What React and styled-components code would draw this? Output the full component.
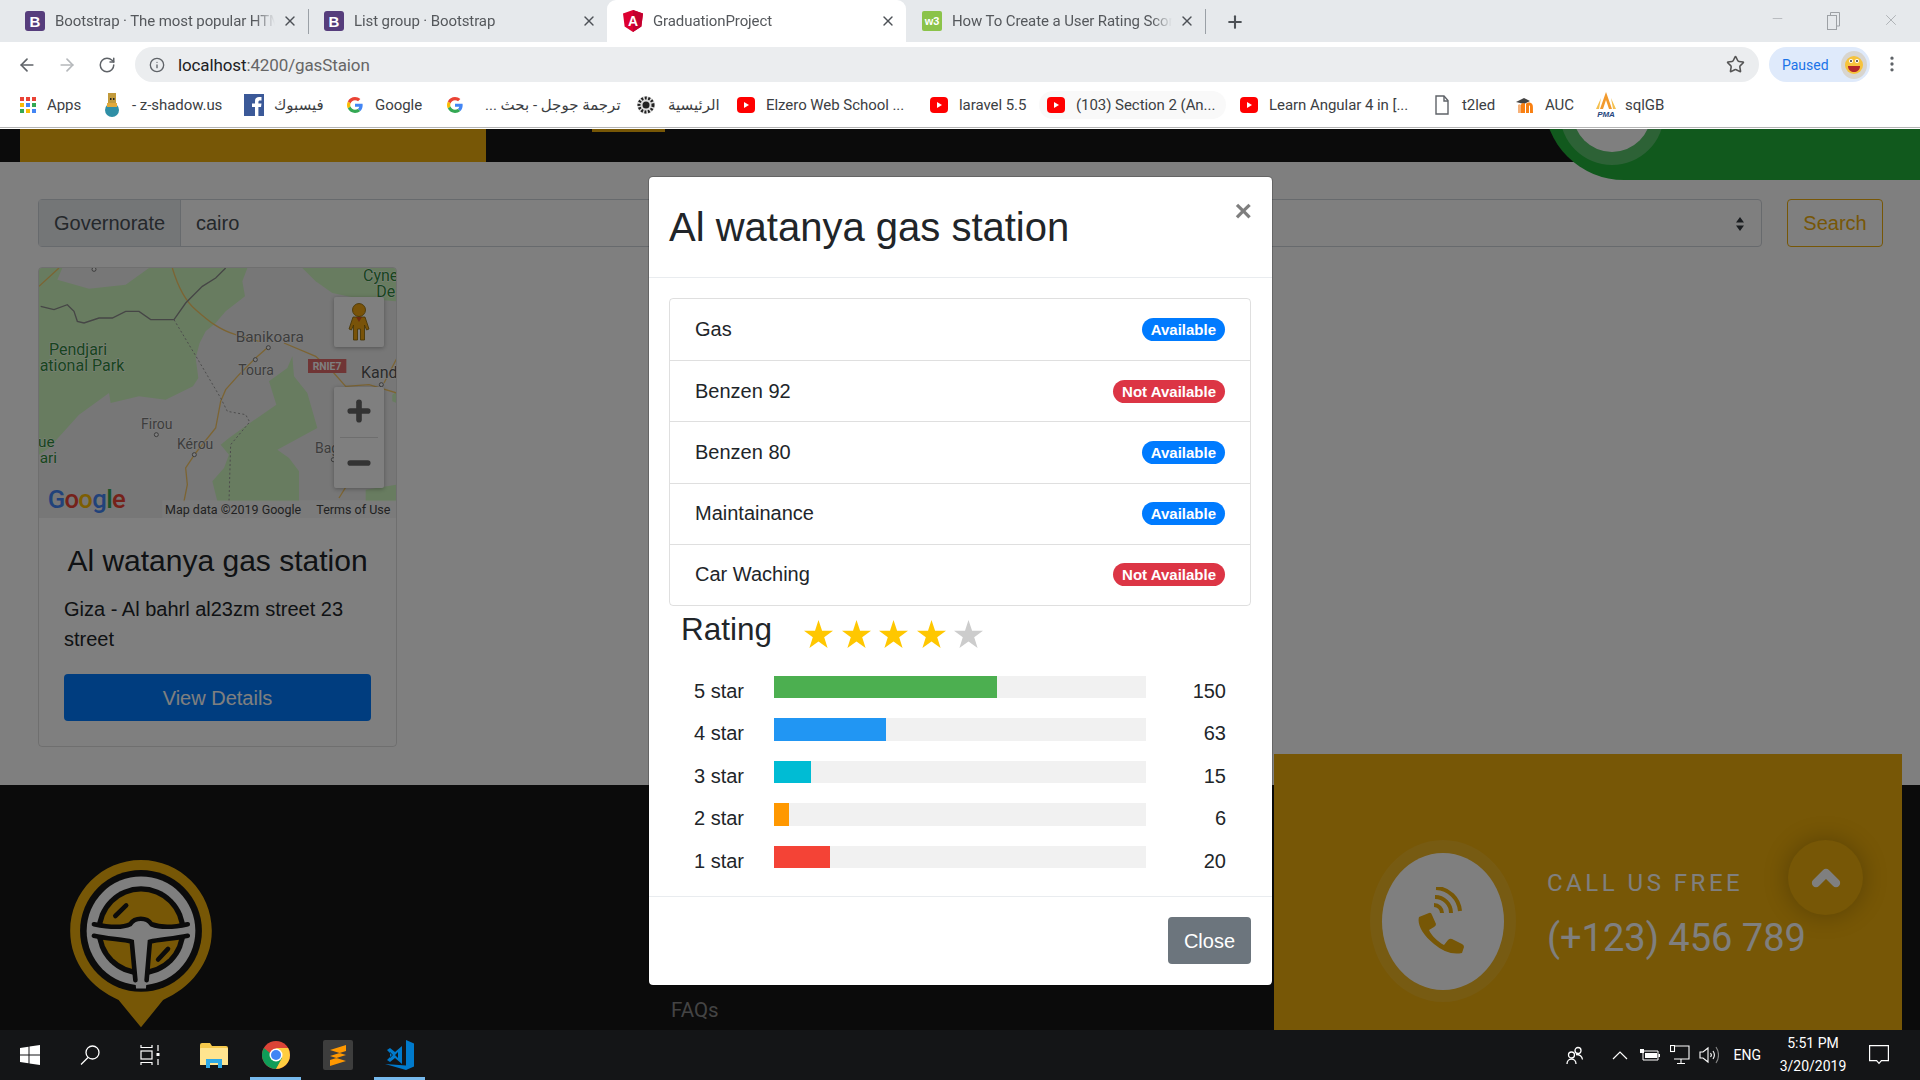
import React from 'react'
import styled, { createGlobalStyle } from 'styled-components'
import { ArrowLeft, ArrowRight, RotateCw, Info, Star, MoreVertical, Plus, X, Minus, ChevronUp } from 'lucide-react'

const GlobalStyle = createGlobalStyle`
  html, body { margin: 0; padding: 0; overflow: hidden; background: #fff; }
  * { box-sizing: border-box; }
  body { font-family: "Liberation Sans", Arial, sans-serif; }
`

const UI_FONT = `Roboto, "DejaVu Sans", sans-serif`

/* ---------- browser chrome ---------- */
const Screen = styled.div`
  width: 1920px;
  height: 1080px;
  display: flex;
  flex-direction: column;
  overflow: hidden;
`
const TabStrip = styled.div`
  height: 42px;
  flex: none;
  background: #e6e9ec;
  display: flex;
  align-items: stretch;
  padding-left: 9px;
  font-family: ${UI_FONT};
`
const Tab = styled.div`
  width: 299px;
  display: flex;
  align-items: center;
  padding-left: 16px;
  position: relative;
  background: ${p => (p.$active ? '#fff' : 'transparent')};
  border-radius: 9px 9px 0 0;
  &::after {
    content: '';
    display: ${p => (p.$sep ? 'block' : 'none')};
    position: absolute;
    right: -1px;
    top: 9px;
    bottom: 8px;
    width: 1px;
    background: #9aa0a6;
  }
`
const TabTitle = styled.span`
  margin-left: 10px;
  width: 220px;
  font-size: 15px;
  letter-spacing: -0.1px;
  color: #55585c;
  white-space: nowrap;
  overflow: hidden;
  flex: none;
  mask-image: linear-gradient(to right, #000 200px, transparent 220px);
`
const TabClose = styled(X)`
  margin-left: 7px;
  flex: none;
  color: #4d5156;
`
const NewTab = styled(Plus)`
  margin: 12px 0 0 20px;
  color: #4d5156;
`
const WindowButtons = styled.div`
  margin-left: auto;
  display: flex;
  align-items: flex-start;
  padding: 11px 20px 0 0;
  gap: 41px;
  color: #9da1a5;
`
const Toolbar = styled.div`
  height: 42px;
  flex: none;
  background: #fff;
  display: flex;
  align-items: flex-start;
  padding-top: 5px;
  position: relative;
  font-family: ${UI_FONT};
`
const NavButton = styled.div`
  width: 40px;
  height: 35px;
  display: flex;
  align-items: center;
  justify-content: center;
  color: ${p => (p.$muted ? '#b5b8bb' : '#5f6368')};
`
const NavRow = styled.div`
  display: flex;
  width: 135px;
  padding-left: 7px;
`
const Omnibox = styled.div`
  width: 1624px;
  height: 35px;
  border-radius: 18px;
  background: #ebedef;
  display: flex;
  align-items: center;
  padding: 0 14px 0 14px;
  color: #5f6368;
`
const Url = styled.span`
  margin-left: 13px;
  font-size: 17px;
  letter-spacing: -0.12px;
  color: #666;
  b { font-weight: 400; color: #202124; }
`
const StarWrap = styled.span`
  margin-left: auto;
  display: flex;
  color: #555;
`
const Paused = styled.div`
  margin-left: 10px;
  width: 101px;
  height: 35px;
  border-radius: 18px;
  background: #dfeafb;
  color: #1a73e8;
  font-size: 14px;
  display: flex;
  align-items: center;
  padding-left: 13px;
  gap: 12px;
`
const Kebab = styled(MoreVertical)`
  margin: 7px 0 0 12px;
  color: #5f6368;
`
const BookmarksBar = styled.div`
  height: 45px;
  flex: none;
  background: #fff;
  display: flex;
  align-items: center;
  padding: 0 0 4px 20px;
  position: relative;
  font-family: ${UI_FONT};
  &::after {
    content: '';
    position: absolute;
    left: 0;
    right: 0;
    bottom: 1px;
    height: 1px;
    background: #b4b4b4;
  }
`
const Bookmark = styled.div`
  width: ${p => p.$w}px;
  flex: none;
  display: flex;
  align-items: center;
  gap: ${p => p.$gap || 11}px;
  font-size: 15px;
  letter-spacing: -0.05px;
  color: #3c4043;
  white-space: nowrap;
  position: relative;
  &::before {
    content: '';
    display: ${p => (p.$hover ? 'block' : 'none')};
    position: absolute;
    left: -8px;
    right: 14px;
    top: -5px;
    bottom: -5px;
    border-radius: 16px;
    background: #f9f9f9;
    z-index: 0;
  }
  > * { position: relative; z-index: 1; flex: none; }
`

const BootstrapIcon = () => (
  <svg width="20" height="20" viewBox="0 0 20 20">
    <rect width="20" height="20" rx="3" fill="#563d7c" />
    <text x="10" y="15.5" textAnchor="middle" fontSize="15" fontWeight="700" fill="#fff" fontFamily="Liberation Sans">B</text>
  </svg>
)
const AngularIcon = () => (
  <svg width="20" height="22" viewBox="0 0 20 22">
    <path d="M10 0L0 3.6l1.6 13L10 22l8.4-5.4 1.6-13z" fill="#dd0031" />
    <path d="M10 0L20 3.6l-1.6 13L10 22z" fill="#c3002f" />
    <text x="10" y="16" textAnchor="middle" fontSize="14" fontWeight="700" fill="#fff" fontFamily="Liberation Sans">A</text>
  </svg>
)
const W3Icon = () => (
  <svg width="20" height="20" viewBox="0 0 20 20">
    <rect width="20" height="20" rx="2" fill="#8bc34a" />
    <text x="10" y="14" textAnchor="middle" fontSize="11" fontWeight="700" fill="#fff" fontFamily="Liberation Sans">w3</text>
  </svg>
)
const GoogleG = ({ size = 16 }) => (
  <svg width={size} height={size} viewBox="0 0 48 48">
    <path fill="#EA4335" d="M24 9.5c3.54 0 6.71 1.22 9.21 3.6l6.85-6.85C35.9 2.38 30.47 0 24 0 14.62 0 6.51 5.38 2.56 13.22l7.98 6.19C12.43 13.72 17.74 9.5 24 9.5z" />
    <path fill="#4285F4" d="M46.98 24.55c0-1.57-.15-3.09-.38-4.55H24v9.02h12.94c-.58 2.96-2.26 5.48-4.78 7.18l7.73 6c4.51-4.18 7.09-10.36 7.09-17.65z" />
    <path fill="#FBBC05" d="M10.53 28.59c-.48-1.45-.76-2.99-.76-4.59s.27-3.14.76-4.59l-7.98-6.19C.92 16.46 0 20.12 0 24c0 3.88.92 7.54 2.56 10.78l7.97-6.19z" />
    <path fill="#34A853" d="M24 48c6.48 0 11.93-2.13 15.89-5.81l-7.73-6c-2.15 1.45-4.92 2.3-8.16 2.3-6.26 0-11.57-4.22-13.47-9.91l-7.98 6.19C6.51 42.62 14.62 48 24 48z" />
  </svg>
)
const AppsIcon = () => {
  const cols = ['#ea4335', '#ea4335', '#ea4335', '#fbbc05', '#4285f4', '#34a853', '#34a853', '#fbbc05', '#4285f4']
  return (
    <svg width="16" height="16" viewBox="0 0 16 16">
      {cols.map((c, i) => <rect key={i} x={(i % 3) * 6} y={Math.floor(i / 3) * 6} width="4" height="4" fill={c} />)}
    </svg>
  )
}
const YoutubeIcon = () => (
  <svg width="18" height="18" viewBox="0 0 18 18">
    <rect y="1" width="18" height="16" rx="4" fill="#f00" />
    <path d="M7 6l5 3-5 3z" fill="#fff" />
  </svg>
)
const FacebookIcon = () => (
  <svg width="20" height="22" viewBox="0 0 20 22">
    <rect width="20" height="22" fill="#3b5998" />
    <path d="M11 22v-9H8V9.500h3V7c0-3 1.800-4 4-4h2.500v3.400H16c-1.200 0-1.600.6-1.600 1.500v1.600h3.100l-.5 3.500h-2.600v9z" fill="#fff" />
  </svg>
)
const GearIcon = () => (
  <svg width="20" height="20" viewBox="0 0 20 20">
    <circle cx="10" cy="10" r="9" fill="#ddd" />
    <circle cx="10" cy="10" r="7" fill="none" stroke="#222" strokeWidth="3" strokeDasharray="2 1.500" />
    <circle cx="10" cy="10" r="3.500" fill="#222" />
  </svg>
)
const BottleIcon = () => (
  <svg width="16" height="24" viewBox="0 0 16 24">
    <rect x="4" y="0" width="8" height="11" fill="#c29a3b" />
    <rect x="6" y="5" width="1.500" height="2" fill="#222" />
    <rect x="9" y="5" width="1.500" height="2" fill="#222" />
    <ellipse cx="8" cy="17" rx="7" ry="7" fill="#2f8fa6" />
    <rect x="3" y="10" width="10" height="4" fill="#e2a93a" />
  </svg>
)
const FileIcon = () => (
  <svg width="16" height="20" viewBox="0 0 16 20" fill="#fff" stroke="#5f6368" strokeWidth="1.400">
    <path d="M2 1h8l4 4.500V19H2z" />
    <path d="M10 1v5h4" fill="none" />
  </svg>
)
const MoodleIcon = () => (
  <svg width="21" height="18" viewBox="0 0 21 18">
    <path d="M1 6l8-4 6 3-6 3z" fill="#444" />
    <path d="M6 17V9c0-2 3-3 4-1v9zM11 17V8c1-2 5-2 6 0 1 1 1 2 1 9h-3V10c-1-1-1-1-1 0v7z" fill="#f98012" />
    <path d="M3 17V9c1-1 2-1 3 0v8z" fill="#f7b27a" />
  </svg>
)
const PmaIcon = () => (
  <svg width="22" height="26" viewBox="0 0 22 26">
    <path d="M11 0L5 17h3l3-9 3 9h3z" fill="#f29a2e" />
    <path d="M6 6L1 17h3zM16 6l5 11h-3z" fill="#f5c04e" />
    <text x="11" y="25" textAnchor="middle" fontSize="8" fontStyle="italic" fontWeight="700" fill="#26477e" fontFamily="Liberation Sans">PMA</text>
  </svg>
)
const Avatar = () => (
  <svg width="26" height="28" viewBox="0 0 26 28">
    <ellipse cx="13" cy="14" rx="13" ry="14" fill="#d8d5cf" />
    <circle cx="13" cy="14" r="9" fill="#f6c33c" />
    <circle cx="10" cy="10" r="2" fill="#fff" /><circle cx="16" cy="10" r="2" fill="#fff" />
    <circle cx="10" cy="10" r="1" fill="#333" /><circle cx="16" cy="10" r="1" fill="#333" />
    <path d="M7 15h12c0 4-3 6-6 6s-6-2-6-6z" fill="#b3262a" />
  </svg>
)

const bookmarks = [
  { w: 84, icon: <AppsIcon />, label: 'Apps' },
  { w: 140, icon: <BottleIcon />, label: '- z-shadow.us', gap: 12 },
  { w: 103, icon: <FacebookIcon />, label: 'فيسبوك', gap: 10 },
  { w: 100, icon: <GoogleG />, label: 'Google', gap: 12 },
  { w: 189, icon: <GoogleG />, label: 'ترجمة جوجل - بحث ...', gap: 22, rtl: true },
  { w: 101, icon: <GearIcon />, label: 'الرئيسية', gap: 12 },
  { w: 193, icon: <YoutubeIcon />, label: 'Elzero Web School ...', gap: 11 },
  { w: 117, icon: <YoutubeIcon />, label: 'laravel 5.5', gap: 11 },
  { w: 193, icon: <YoutubeIcon />, label: '(103) Section 2 (An...', gap: 11, hover: true },
  { w: 194, icon: <YoutubeIcon />, label: 'Learn Angular 4 in [...', gap: 11 },
  { w: 81, icon: <FileIcon />, label: 't2led', gap: 12 },
  { w: 80, icon: <MoodleIcon />, label: 'AUC', gap: 9 },
  { w: 80, icon: <PmaIcon />, label: 'sqlGB', gap: 8 },
]

/* ---------- the page behind the modal ---------- */
const Viewport = styled.div`
  flex: 1;
  position: relative;
  overflow: hidden;
  display: flex;
  flex-direction: column;
  background: #fff;
`
const TopBar = styled.div`
  height: 33px;
  flex: none;
  background: #161616;
  display: flex;
  align-items: flex-start;
  padding-left: 20px;
`
const TopBarBrand = styled.div`
  width: 466px;
  height: 33px;
  background: #eeae0c;
`
const TopBarMark = styled.div`
  width: 73px;
  height: 3px;
  margin-left: 106px;
  background: #eeae0c;
`
const GreenCorner = styled.div`
  position: absolute;
  top: -50px;
  right: 0;
  width: 376px;
  height: 101px;
  background: #22b23a;
  border-bottom-left-radius: 80px;
`
const RingOuter = styled.div`
  position: absolute;
  left: 1560px;
  top: -68px;
  width: 104px;
  height: 104px;
  border-radius: 50%;
  background: #5ac46d;
  display: flex;
  align-items: center;
  justify-content: center;
`
const RingInner = styled.div`
  width: 78px;
  height: 78px;
  border-radius: 50%;
  background: #fff;
`
const Main = styled.main`
  flex: 1;
  padding: 37px 37px 0 38px;
`
const SearchRow = styled.div`
  display: flex;
  gap: 25px;
`
const InputGroup = styled.div`
  width: 1724px;
  height: 48px;
  display: flex;
  border: 1px solid #ced4da;
  border-radius: 4px;
  font-size: 20px;
  color: #495057;
`
const Addon = styled.div`
  width: 142px;
  background: #e9ecef;
  border-right: 1px solid #ced4da;
  display: flex;
  align-items: center;
  padding-left: 15px;
`
const SelectValue = styled.div`
  flex: 1;
  display: flex;
  align-items: center;
  padding-left: 15px;
  position: relative;
`
const SelectCaret = styled.svg`
  position: absolute;
  right: 16px;
  top: 16px;
`
const SearchButton = styled.button`
  width: 96px;
  height: 48px;
  background: transparent;
  border: 1px solid #eeae0c;
  border-radius: 4px;
  color: #eeae0c;
  font: inherit;
  font-size: 20px;
  padding: 0;
`
const Card = styled.article`
  width: 359px;
  height: 480px;
  margin-top: 20px;
  border: 1px solid rgba(0, 0, 0, 0.125);
  border-radius: 4px;
  display: flex;
  flex-direction: column;
`
const MapBox = styled.div`
  height: 250px;
  flex: none;
  position: relative;
  overflow: hidden;
  border-radius: 3px 3px 0 0;
  background: #eee;
  svg { display: block; }
`
const MapButton = styled.div`
  position: absolute;
  left: 295px;
  width: 50px;
  background: #fff;
  border-radius: 2px;
  box-shadow: 0 1px 4px rgba(0, 0, 0, 0.3);
  display: flex;
  flex-direction: column;
  align-items: center;
`
const PegmanButton = styled(MapButton)`
  top: 29px;
  height: 50px;
  justify-content: center;
`
const ZoomButton = styled(MapButton)`
  top: 119px;
  height: 101px;
  padding-top: 9px;
  color: #666;
`
const ZoomSplit = styled.span`
  width: 38px;
  height: 1px;
  flex: none;
  margin: 11px 0 10px;
  background: #ddd;
`
const CardBody = styled.div`
  padding: 25px;
`
const CardTitle = styled.h5`
  margin: 0 0 15px;
  font-size: 30px;
  font-weight: 400;
  line-height: 36px;
  text-align: center;
  color: #212529;
  white-space: nowrap;
`
const CardText = styled.p`
  margin: 0 0 20px;
  font-size: 20px;
  line-height: 30px;
  color: #212529;
`
const DetailsButton = styled.button`
  display: block;
  width: 100%;
  height: 47px;
  border: 0;
  border-radius: 4px;
  background: #007bff;
  color: #fff;
  font: inherit;
  font-size: 20px;
  padding: 2px 0 0;
`
const Footer = styled.footer`
  height: 245px;
  flex: none;
  background: #161616;
  display: flex;
  align-items: flex-start;
  padding-left: 68px;
`
const FooterLogo = styled.svg`
  margin-top: 75px;
  flex: none;
`
const FooterLink = styled.a`
  margin: 213px 0 0 457px;
  font-family: Roboto, sans-serif;
  font-size: 20.500px;
  line-height: 24px;
  color: #888;
`
const CallPanel = styled.div`
  width: 628px;
  height: 276px;
  margin: -31px 18px 0 auto;
  background: #eeae0c;
  display: flex;
  align-items: flex-start;
  padding: 86px 0 0 96px;
`
const PhoneRing = styled.div`
  width: 146px;
  height: 162px;
  flex: none;
  border-radius: 50%;
  background: rgba(255, 255, 255, 0.1);
  display: flex;
  align-items: center;
  justify-content: center;
`
const PhoneDisc = styled.div`
  width: 122px;
  height: 137px;
  border-radius: 50%;
  background: #fff;
  display: flex;
  align-items: center;
  justify-content: center;
`
const CallText = styled.div`
  margin: 29px 0 0 31px;
  font-family: Roboto, sans-serif;
  color: #fff;
  white-space: nowrap;
`
const CallLabel = styled.div`
  font-size: 24px;
  line-height: 28px;
  letter-spacing: 3.500px;
`
const CallNumber = styled.div`
  margin-top: 18px;
  font-size: 38px;
  line-height: 46px;
`
const ScrollTop = styled.div`
  position: absolute;
  right: 57px;
  bottom: 115px;
  width: 75px;
  height: 75px;
  border-radius: 50%;
  background: #eeae0c;
  box-shadow: 0 0 24px rgba(0, 0, 0, 0.25);
  color: #fff;
  display: flex;
  align-items: center;
  justify-content: center;
`

/* ---------- modal ---------- */
const Backdrop = styled.div`
  position: absolute;
  inset: 0;
  background: rgba(0, 0, 0, 0.5);
`
const Modal = styled.section`
  position: absolute;
  left: 648px;
  top: 47px;
  width: 625px;
  height: 810px;
  background: #fff;
  border: 1px solid rgba(0, 0, 0, 0.2);
  border-radius: 5px;
  color: #212529;
  background-clip: padding-box;
`
const ModalHeader = styled.header`
  height: 101px;
  border-bottom: 1px solid #e9ecef;
  display: flex;
  align-items: center;
  justify-content: space-between;
  padding: 0 20px;
`
const ModalTitle = styled.h1`
  margin: 0;
  font-size: 40px;
  font-weight: 400;
  line-height: 48px;
`
const CloseX = styled.span`
  align-self: flex-start;
  margin: 16px 0 0;
  font-size: 30px;
  font-weight: 700;
  line-height: 36px;
  color: #000;
  opacity: 0.5;
`
const ModalBody = styled.div`
  padding: 20px 21px 0 20px;
`
const ServiceList = styled.ul`
  list-style: none;
  margin: 0;
  padding: 0;
  border: 1px solid rgba(0, 0, 0, 0.125);
  border-radius: 4px;
`
const ServiceItem = styled.li`
  height: 61.200px;
  padding: 0 25px;
  display: flex;
  align-items: center;
  justify-content: space-between;
  font-size: 20px;
  & + & { border-top: 1px solid rgba(0, 0, 0, 0.125); }
`
const Badge = styled.span`
  font-size: 15px;
  font-weight: 700;
  line-height: 15px;
  padding: 4px 9px;
  border-radius: 12px;
  color: #fff;
  background: ${p => (p.$ok ? '#007bff' : '#dc3545')};
`
const RatingRow = styled.div`
  display: flex;
  align-items: flex-start;
  margin: 5px 0 28px;
  padding-left: 12px;
`
const RatingTitle = styled.h2`
  margin: 0;
  width: 123px;
  font-size: 31.500px;
  font-weight: 400;
  line-height: 36px;
`
const Stars = styled.div`
  display: flex;
  gap: 8.600px;
  margin-top: 9px;
`
const BarRow = styled.div`
  height: 42.500px;
  display: grid;
  grid-template-columns: 75px 372px 50px;
  column-gap: 30px;
  font-size: 20px;
  line-height: 30px;
`
const BarLabel = styled.span`
  text-align: right;
`
const BarTrack = styled.div`
  height: 22.500px;
  background: #f1f1f1;
`
const BarFill = styled.div`
  height: 100%;
  background: ${p => p.$color};
`
const BarValue = styled.span`
  text-align: right;
`
const ModalFooter = styled.div`
  position: absolute;
  left: 0;
  right: 0;
  bottom: 0;
  height: 89px;
  border-top: 1px solid #e9ecef;
  display: flex;
  justify-content: flex-end;
  padding: 20px 21px 0;
`
const CloseButton = styled.button`
  width: 83px;
  height: 47px;
  border: 0;
  border-radius: 4px;
  background: #6c757d;
  color: #fff;
  font: inherit;
  font-size: 20px;
  padding: 1px 0 0;
`

/* ---------- windows taskbar ---------- */
const Taskbar = styled.div`
  height: 50px;
  flex: none;
  background: #141517;
  display: flex;
  align-items: stretch;
  color: #fff;
  font-family: ${UI_FONT};
`
const TaskSlot = styled.div`
  width: ${p => p.$w || 50}px;
  flex: none;
  display: flex;
  align-items: center;
  justify-content: center;
  box-shadow: ${p => (p.$on ? 'inset 0 -3px 0 #76b9ed' : 'none')};
  margin-right: ${p => p.$mr || 0}px;
`
const Tray = styled.div`
  margin-left: auto;
  display: flex;
  align-items: center;
  padding-right: 31px;
`
const TrayIcon = styled.span`
  display: flex;
  margin-right: ${p => p.$mr || 0}px;
`
const Lang = styled.span`
  font-size: 14px;
  margin-right: 18px;
`
const Clock = styled.div`
  width: 68px;
  text-align: center;
  font-size: 14px;
  line-height: 23px;
  white-space: nowrap;
  margin-right: 22px;
`

const FullStar = ({ color }) => (
  <svg width="29" height="28" viewBox="0 0 29 28">
    <path d="M14.500 0l3.600 10.700h11l-8.900 6.600 3.400 10.700-9.100-6.600-9.100 6.600 3.400-10.700L0 10.700h11z" fill={color} />
  </svg>
)

const services = [
  { name: 'Gas', ok: true },
  { name: 'Benzen 92', ok: false },
  { name: 'Benzen 80', ok: true },
  { name: 'Maintainance', ok: true },
  { name: 'Car Waching', ok: false },
]
const ratings = [
  { stars: 5, count: 150, pct: 60, color: '#4CAF50' },
  { stars: 4, count: 63, pct: 30, color: '#2196F3' },
  { stars: 3, count: 15, pct: 10, color: '#00bcd4' },
  { stars: 2, count: 6, pct: 4, color: '#ff9800' },
  { stars: 1, count: 20, pct: 15, color: '#f44336' },
]

const MapText = styled.text`
  font-family: Roboto, sans-serif;
  font-size: ${p => p.$size || 40}px;
  fill: ${p => p.$color || '#7a7a7a'};
  stroke: #fff;
  stroke-width: 3px;
  paint-order: stroke;
`
const MapPin = ({ x, y }) => <circle cx={x} cy={y} r="6" fill="#fff" stroke="#777" strokeWidth="3" />

const MapDrawing = () => (
  <svg width="358" height="250" viewBox="0 0 1074 750">
    <rect width="1074" height="750" fill="#eee" />
    <g fill="#d0f8c0">
      <path d="M0 0L70 0 55 35 150 62 260 50 330 0 625 0 610 40 618 85 560 130 530 165 500 190 482 225 470 270 478 330 462 355 380 395 300 385 215 405 210 375 120 440 30 540 0 560Z" />
      <path d="M760 265L745 300 690 340 712 410 640 460 570 510 545 530 570 560 555 600 520 640 535 700 780 700 780 610 750 570 715 545 835 480 805 375 765 325Z" />
      <path d="M790 0L830 40 880 75 950 90 1074 100 1074 0Z" />
      <path d="M980 665L1074 650 1074 700 980 700Z" />
      <path d="M1060 380L1074 370 1074 405 1060 400Z" />
    </g>
    <g fill="none" stroke="#f8c967" strokeWidth="4">
      <path d="M400 0C415 50 440 100 470 125 510 160 540 185 590 200L660 220" />
      <path d="M735 225L830 265 880 310 920 355 990 350 1074 375" />
      <path d="M690 235L650 270 600 320 560 365 545 400 530 480 470 555 440 600 445 650 435 700" />
      <path d="M0 55L60 0M1074 270L1035 345M900 690L925 650" />
    </g>
    <path d="M5 115L45 125 85 110 105 130 115 160 135 165 180 150 220 150 260 130 300 130 335 155 405 155 440 105 490 55 530 30 560 0" fill="none" stroke="#8c8c8c" strokeWidth="4" />
    <path d="M405 155L480 280 545 390 565 430 620 440 632 462 575 530 570 700" fill="none" stroke="#9a9a9a" strokeWidth="3" strokeDasharray="6 7" />
    <MapPin x={688} y={239} /><MapPin x={649} y={275} /><MapPin x={352} y={500} /><MapPin x={466} y={560} /><MapPin x={1027} y={350} /><MapPin x={165} y={4} /><MapPin x={883} y={575} />
    <MapText x="590" y="222" $size="46">Banikoara</MapText>
    <MapText x="598" y="322" $size="42">Toura</MapText>
    <MapText x="306" y="483" $size="42">Firou</MapText>
    <MapText x="414" y="543" $size="42">Kérou</MapText>
    <MapText x="828" y="556" $size="42">Bag</MapText>
    <MapText x="966" y="330" $size="48" $color="#555">Kand</MapText>
    <MapText x="972" y="40" $size="48" $color="#2e8b3a">Cyne</MapText>
    <MapText x="1012" y="88" $size="48" $color="#2e8b3a">De</MapText>
    <MapText x="30" y="262" $size="48" $color="#2e8b3a">Pendjari</MapText>
    <MapText x="2" y="310" $size="48" $color="#2e8b3a">ational Park</MapText>
    <MapText x="-3" y="536" $size="46" $color="#2e8b3a">ue</MapText>
    <MapText x="2" y="586" $size="46" $color="#2e8b3a">ari</MapText>
    <rect x="807" y="273" width="115" height="42" fill="#e06a6a" />
    <text x="864" y="305" textAnchor="middle" fontSize="31" fontWeight="700" fill="#fff" fontFamily="Roboto">RNIE7</text>
    <rect y="697" x="370" width="704" height="53" fill="#fff" fillOpacity="0.55" />
    <text x="378" y="737" fontSize="37.500" fill="#444" fontFamily="Roboto">Map data ©2019 Google</text>
    <text x="832" y="737" fontSize="37.500" fill="#444" fontFamily="Roboto">Terms of Use</text>
    <text x="26" y="720" fontSize="77" fontWeight="500" fontFamily="Roboto" letterSpacing="-2">
      <tspan fill="#4285f4">G</tspan><tspan fill="#ea4335">o</tspan><tspan fill="#fbbc05">o</tspan><tspan fill="#4285f4">g</tspan><tspan fill="#34a853">l</tspan><tspan fill="#ea4335">e</tspan>
    </text>
  </svg>
)

const Pegman = () => (
  <svg width="22" height="38" viewBox="0 0 22 38">
    <circle cx="11" cy="7" r="6.500" fill="#f3a712" stroke="#8a6400" strokeWidth="0.800" />
    <path d="M5 14h12l4 12-2.500 1-2-5v15h-4V26h-3v11h-4V22l-2 5L1 26z" fill="#f3a712" stroke="#8a6400" strokeWidth="0.800" />
    <path d="M8 14h6l-3 5z" fill="#d9541e" />
  </svg>
)

const SteeringLogo = () => (
  <FooterLogo width="146" height="168" viewBox="27 10 432 510">
    <path d="M243 10C362 10 458 106 458 225 458 325 390 400 310 435L243 518 175 435C95 400 28 325 28 225 28 106 124 10 243 10Z" fill="#eeae0c" />
    <circle cx="243" cy="225" r="185" fill="#161616" />
    <circle cx="243" cy="225" r="165" fill="#fff" />
    <circle cx="243" cy="225" r="135" fill="#161616" />
    <circle cx="243" cy="225" r="119" fill="#eeae0c" />
    <path d="M85 205C150 215 190 215 210 205 225 183 260 183 275 205 300 215 340 215 400 205L400 240C340 250 300 250 270 258L258 400 228 400 215 258C190 250 140 250 85 240Z" fill="#fff" />
    <path d="M100 205C150 215 190 215 210 205 225 183 260 183 275 205 300 215 340 215 385 205" fill="none" stroke="#161616" strokeWidth="14" strokeLinecap="round" />
    <path d="M100 240C140 250 190 250 215 258L226 375M385 240C340 250 300 250 270 258L260 375" fill="none" stroke="#161616" strokeWidth="14" strokeLinecap="round" />
    <path d="M165 180L198 148M295 312L325 280" fill="none" stroke="#161616" strokeWidth="14" strokeLinecap="round" />
  </FooterLogo>
)

const PhoneGlyph = () => (
  <svg width="50" height="68" viewBox="0 0 50 68" fill="#eeae0c">
    <path transform="translate(0 23)" d="M1 7L11 3Q13 2 14 5L18 14Q18 16 16 17L11 20C13 25 20 32 26 35L30 30Q32 28 34 29L44 34Q46 35 46 37L44 43Q30 46 16 34C4 24-1 14 1 7Z" />
    <g fill="none" stroke="#eeae0c" strokeWidth="4">
      <path d="M16 18A8 8 0 0 1 24 26" />
      <path d="M17 10A16 16 0 0 1 33 26" />
      <path d="M18 1A25 25 0 0 1 42 24" />
    </g>
  </svg>
)

const WindowsLogo = () => (
  <svg width="20" height="20" viewBox="0 0 20 20" fill="#fff">
    <path d="M0 3l8.500-1.200v7.700H0zM9.500 1.600L20 0v9.500H9.500zM0 10.500h8.500v7.700L0 17zM9.500 10.500H20V20L9.500 18.400z" />
  </svg>
)
const SearchGlyph = () => (
  <svg width="20" height="20" viewBox="0 0 20 20" fill="none" stroke="#fff" strokeWidth="1.300">
    <circle cx="12.500" cy="7.500" r="6.500" /><path d="M8 12.500L1 19.500" />
  </svg>
)
const TaskView = () => (
  <svg width="20" height="20" viewBox="0 0 20 20" fill="none" stroke="#fff" strokeWidth="1.200">
    <path d="M1 0v2.500h11V0M1 20v-2.500h11V20" /><rect x="1" y="6" width="11" height="8" /><path d="M18 0v6M18 14v6" /><rect x="16.500" y="8" width="3" height="3" fill="#fff" stroke="none" />
  </svg>
)
const ExplorerIcon = () => (
  <svg width="28" height="26" viewBox="0 0 28 26">
    <path d="M0 3q0-2 2-2h8l2 3h14q2 0 2 2v17H0z" fill="#f6c94c" />
    <rect y="6" width="28" height="17" rx="1" fill="#ffe48f" />
    <path d="M6 26v-9h16v9h-4v-5h-8v5z" fill="#2fa9e6" />
  </svg>
)
const ChromeIcon = () => (
  <svg width="28" height="28" viewBox="-14 -14 28 28">
    <circle r="14" fill="#db4437" />
    <path d="M-12.100 -7A14 14 0 0 0 -7 12.100 14 14 0 0 0 0 14L7 2 -6 -2z" fill="#0f9d58" />
    <path d="M0 14A14 14 0 0 0 12.100 -7H0L6 3z" fill="#ffcd40" />
    <circle r="6.500" fill="#fff" /><circle r="5" fill="#4285f4" />
  </svg>
)
const SublimeIcon = () => (
  <svg width="30" height="30" viewBox="0 0 30 30">
    <rect width="30" height="30" rx="2" fill="#3d3d3d" />
    <path d="M7 10L23 5v6L7 16zM7 10v6l16 5v-6zM23 15v6L7 26v-6z" fill="#ff9800" />
  </svg>
)
const VsCodeIcon = () => (
  <svg width="30" height="30" viewBox="0 0 30 30">
    <path d="M21 0l8 3.500v23L21 30 0 24l21 1.500V0z" fill="#007acc" />
    <path d="M2 10l3-2 5 4 7-6v18l-7-6-5 4-3-2 5-5zM5 12v6l3-3zM13 12l-3 3 3 3z" fill="#007acc" fillRule="evenodd" />
  </svg>
)
const PeopleIcon = () => (
  <svg width="18" height="18" viewBox="0 0 18 18" fill="none" stroke="#fff" strokeWidth="1.300">
    <circle cx="12" cy="4.500" r="3" /><circle cx="5.500" cy="9" r="3" /><path d="M1 18c0-3 2-5 4.500-5s4.500 2 4.500 5M10 8.500c3 0 6 1.500 6.500 5" />
  </svg>
)
const CaretUp = () => (
  <svg width="16" height="10" viewBox="0 0 16 10" fill="none" stroke="#fff" strokeWidth="1.200"><path d="M1 9l7-7 7 7" /></svg>
)
const BatteryIcon = () => (
  <svg width="20" height="14" viewBox="0 0 20 14" fill="#fff">
    <path d="M3 3h15v9H3z" fill="none" stroke="#fff" /><rect x="5" y="5" width="12" height="5" /><rect x="18.500" y="6" width="1.500" height="3" /><rect y="1" width="4" height="4" />
  </svg>
)
const NetworkIcon = () => (
  <svg width="20" height="20" viewBox="0 0 20 20" fill="none" stroke="#fff" strokeWidth="1.100">
    <path d="M4 1h15v13H4M11 14v4M7 18.500h8" /><rect x="0.500" y="0.500" width="4" height="6" />
  </svg>
)
const VolumeIcon = () => (
  <svg width="20" height="18" viewBox="0 0 20 18" fill="none" stroke="#fff" strokeWidth="1.100">
    <path d="M1 6h3l5-4v14l-5-4H1z" /><path d="M11.500 7a3 3 0 0 1 0 4M14 5a7 7 0 0 1 0 8" /><path d="M17 1a14 14 0 0 1 0 16" stroke="#888" />
  </svg>
)
const NotifyIcon = () => (
  <svg width="20" height="20" viewBox="0 0 20 20" fill="none" stroke="#fff" strokeWidth="1.200">
    <path d="M.600.600h18.800v15h-7l-2.400 2.800-2.400-2.800h-7z" />
  </svg>
)

const App = () => {
  return (
    <Screen>
      <GlobalStyle />
      <TabStrip>
        <Tab $sep>
          <BootstrapIcon />
          <TabTitle>Bootstrap · The most popular HTML</TabTitle>
          <TabClose size={16} strokeWidth={2} />
        </Tab>
        <Tab>
          <BootstrapIcon />
          <TabTitle>List group · Bootstrap</TabTitle>
          <TabClose size={16} strokeWidth={2} />
        </Tab>
        <Tab $active>
          <AngularIcon />
          <TabTitle>GraduationProject</TabTitle>
          <TabClose size={16} strokeWidth={2} />
        </Tab>
        <Tab $sep>
          <W3Icon />
          <TabTitle>How To Create a User Rating Score</TabTitle>
          <TabClose size={16} strokeWidth={2} />
        </Tab>
        <NewTab size={20} strokeWidth={2.5} />
        <WindowButtons>
          <Minus size={15} strokeWidth={1} />
          <svg width="15" height="20" viewBox="0 0 15 20" fill="none" stroke="currentColor"><rect x="1.500" y="4.500" width="9" height="14" /><path d="M4.500 4V1.500h9V15H11" /></svg>
          <X size={18} strokeWidth={1} />
        </WindowButtons>
      </TabStrip>
      <Toolbar>
        <NavRow>
          <NavButton><ArrowLeft size={20} /></NavButton>
          <NavButton $muted><ArrowRight size={20} /></NavButton>
          <NavButton><RotateCw size={18} /></NavButton>
        </NavRow>
        <Omnibox>
          <Info size={16} />
          <Url><b>localhost</b>:4200/gasStaion</Url>
          <StarWrap><Star size={19} /></StarWrap>
        </Omnibox>
        <Paused>Paused <Avatar /></Paused>
        <Kebab size={20} />
      </Toolbar>
      <BookmarksBar>
        {bookmarks.map(b => (
          <Bookmark key={b.label} $w={b.w} $gap={b.gap} $hover={b.hover}>
            {b.icon}
            <span dir={b.rtl ? 'rtl' : undefined}>{b.label}</span>
          </Bookmark>
        ))}
      </BookmarksBar>

      <Viewport>
        <TopBar>
          <TopBarBrand />
          <TopBarMark />
        </TopBar>
        <GreenCorner />
        <RingOuter><RingInner /></RingOuter>
        <Main>
          <SearchRow>
            <InputGroup>
              <Addon>Governorate</Addon>
              <SelectValue>
                cairo
                <SelectCaret width="10" height="16" viewBox="0 0 10 16" fill="#343a40"><path d="M5 1l4 5.500H1zM5 15L1 9.500h8z" /></SelectCaret>
              </SelectValue>
            </InputGroup>
            <SearchButton>Search</SearchButton>
          </SearchRow>
          <Card>
            <MapBox>
              <MapDrawing />
              <PegmanButton><Pegman /></PegmanButton>
              <ZoomButton>
                <Plus size={30} strokeWidth={4.5} />
                <ZoomSplit />
                <Minus size={30} strokeWidth={4.5} />
              </ZoomButton>
            </MapBox>
            <CardBody>
              <CardTitle>Al watanya gas station</CardTitle>
              <CardText>Giza - Al bahrl al23zm street 23 street</CardText>
              <DetailsButton>View Details</DetailsButton>
            </CardBody>
          </Card>
        </Main>
        <Footer>
          <SteeringLogo />
          <FooterLink>FAQs</FooterLink>
          <CallPanel>
            <PhoneRing>
              <PhoneDisc><PhoneGlyph /></PhoneDisc>
            </PhoneRing>
            <CallText>
              <CallLabel>CALL US FREE</CallLabel>
              <CallNumber>(+123) 456 789</CallNumber>
            </CallText>
          </CallPanel>
        </Footer>
        <ScrollTop><ChevronUp size={40} strokeWidth={5} /></ScrollTop>

        <Backdrop />
        <Modal>
          <ModalHeader>
            <ModalTitle>Al watanya gas station</ModalTitle>
            <CloseX>×</CloseX>
          </ModalHeader>
          <ModalBody>
            <ServiceList>
              {services.map(s => (
                <ServiceItem key={s.name}>
                  {s.name}
                  <Badge $ok={s.ok}>{s.ok ? 'Available' : 'Not Available'}</Badge>
                </ServiceItem>
              ))}
            </ServiceList>
            <RatingRow>
              <RatingTitle>Rating</RatingTitle>
              <Stars>
                {[0, 1, 2, 3, 4].map(i => <FullStar key={i} color={i < 4 ? '#ffc700' : '#ccc'} />)}
              </Stars>
            </RatingRow>
            {ratings.map(r => (
              <BarRow key={r.stars}>
                <BarLabel>{r.stars} star</BarLabel>
                <BarTrack><BarFill $color={r.color} style={{ width: `${r.pct}%` }} /></BarTrack>
                <BarValue>{r.count}</BarValue>
              </BarRow>
            ))}
          </ModalBody>
          <ModalFooter>
            <CloseButton>Close</CloseButton>
          </ModalFooter>
        </Modal>
      </Viewport>

      <Taskbar>
        <TaskSlot $w={60}><WindowsLogo /></TaskSlot>
        <TaskSlot $w={60}><SearchGlyph /></TaskSlot>
        <TaskSlot $w={60} $mr={8}><TaskView /></TaskSlot>
        <TaskSlot $w={51} $mr={11}><ExplorerIcon /></TaskSlot>
        <TaskSlot $w={51} $on $mr={11}><ChromeIcon /></TaskSlot>
        <TaskSlot $w={51} $mr={11}><SublimeIcon /></TaskSlot>
        <TaskSlot $w={51} $on><VsCodeIcon /></TaskSlot>
        <Tray>
          <TrayIcon $mr={28}><PeopleIcon /></TrayIcon>
          <TrayIcon $mr={12}><CaretUp /></TrayIcon>
          <TrayIcon $mr={10}><BatteryIcon /></TrayIcon>
          <TrayIcon $mr={9}><NetworkIcon /></TrayIcon>
          <TrayIcon $mr={15}><VolumeIcon /></TrayIcon>
          <Lang>ENG</Lang>
          <Clock>5:51 PM<br />3/20/2019</Clock>
          <TrayIcon><NotifyIcon /></TrayIcon>
        </Tray>
      </Taskbar>
    </Screen>
  )
}

export default App
